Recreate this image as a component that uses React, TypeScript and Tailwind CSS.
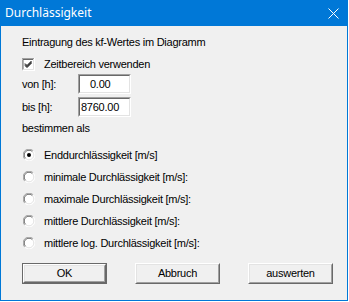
const ui = "font-['Liberation_Sans',Arial,sans-serif] text-[11px] leading-[13px] tracking-[-0.25px] text-black";

function CheckBox({ checked }: { checked: boolean }) {
  return (
    <svg width="13" height="13" viewBox="0 0 13 13" className="shrink-0">
      <rect x="0" y="0" width="13" height="13" fill="#ffffff" />
      <path d="M0 12.5V0.5H12.5" stroke="#a0a0a0" fill="none" />
      <path d="M1 11.5V1.5H11.5" stroke="#696969" fill="none" />
      <path d="M1.5 12.5H12.5V0" stroke="#ffffff" fill="none" />
      <path d="M1.5 11.5H11.5V1" stroke="#e3e3e3" fill="none" />
      {checked && (
        <path d="M3 5.5l2 2 4.5-4.5M3 6.5l2 2 4.5-4.5M3 7.5l2 2 4.5-4.5" stroke="#000" fill="none" />
      )}
    </svg>
  );
}

function Radio({ checked }: { checked: boolean }) {
  return (
    <svg width="12" height="12" viewBox="0 0 12 12" className="shrink-0">
      <circle cx="6" cy="6" r="5.5" fill="#ffffff" />
      <path d="M1.8 10.2A5.5 5.5 0 0 1 10.2 1.8" stroke="#a0a0a0" fill="none" />
      <path d="M2.6 9.4A4.5 4.5 0 0 1 9.4 2.6" stroke="#696969" fill="none" />
      <path d="M10.2 1.8A5.5 5.5 0 0 1 1.8 10.2" stroke="#ffffff" fill="none" />
      <path d="M9.4 2.6A4.5 4.5 0 0 1 2.6 9.4" stroke="#e3e3e3" fill="none" />
      {checked && <circle cx="6" cy="6" r="2" fill="#000" />}
    </svg>
  );
}

function Edit({ value, pad }: { value: string; pad: string }) {
  return (
    <div className="w-[53px] h-[20px] border border-t-[#a0a0a0] border-l-[#a0a0a0] border-b-white border-r-white">
      <div className={`h-full border border-t-[#696969] border-l-[#696969] border-b-[#e3e3e3] border-r-[#e3e3e3] bg-white flex items-center ${pad}`}>
        {value}
      </div>
    </div>
  );
}

function Button({ label, isDefault }: { label: string; isDefault?: boolean }) {
  return (
    <div className={`w-[85px] h-[21px] ${isDefault ? "border border-[#696969]" : ""}`}>
      <div className="h-full border border-t-white border-l-white border-b-[#696969] border-r-[#696969]">
        <div className="h-full border border-t-[#e3e3e3] border-l-[#e3e3e3] border-b-[#a0a0a0] border-r-[#a0a0a0] bg-[#f0f0f0] flex items-center justify-center">
          {label}
        </div>
      </div>
    </div>
  );
}

const options = [
  "Enddurchlässigkeit [m/s]",
  "minimale Durchlässigkeit [m/s]:",
  "maximale Durchlässigkeit [m/s]:",
  "mittlere Durchlässigkeit [m/s]:",
  "mittlere log. Durchlässigkeit [m/s]:",
];

export default function App() {
  return (
    <div className="w-[349px] h-[302px] bg-white">
      <div className="w-[348px] h-[301px] bg-[#0078d7] px-px pb-px flex flex-col">
        <div className="h-[26px] flex items-center justify-between pl-[4px] pr-[8px]">
          <span className="font-['Noto_Sans',sans-serif] text-[12px] text-white leading-none">Durchlässigkeit</span>
          <svg width="11" height="11" viewBox="0 0 11 11">
            <path d="M0.5 0.5L10.5 10.5M10.5 0.5L0.5 10.5" stroke="#ffffff" strokeWidth="1" />
          </svg>
        </div>
        <div className={`flex-1 bg-[#f0f0f0] flex flex-col pl-[21px] ${ui}`}>
          <div className="mt-[10px] h-[13px]">Eintragung des kf-Wertes im Diagramm</div>
          <div className="mt-[9px] h-[13px] flex items-center">
            <CheckBox checked />
            <span className="ml-[9px]">Zeitbereich verwenden</span>
          </div>
          <div className="mt-[3px] h-[20px] flex items-center">
            <span className="w-[56px]">von [h]:</span>
            <Edit value="0.00" pad="pl-[10px]" />
          </div>
          <div className="mt-[3px] h-[20px] flex items-center">
            <span className="w-[56px]">bis [h]:</span>
            <Edit value="8760.00" pad="pl-[1px]" />
          </div>
          <div className="mt-[5px] h-[13px]">bestimmen als</div>
          <div className="mt-[9px] flex flex-col">
            {options.map((o, i) => (
              <div key={o} className="h-[22px] flex items-center">
                <div className="ml-[1px]">
                  <Radio checked={i === 0} />
                </div>
                <span className="ml-[9px]">{o}</span>
              </div>
            ))}
          </div>
          <div className="mt-[9px] flex gap-[28px]">
            <Button label="OK" isDefault />
            <Button label="Abbruch" />
            <Button label="auswerten" />
          </div>
        </div>
      </div>
    </div>
  );
}
